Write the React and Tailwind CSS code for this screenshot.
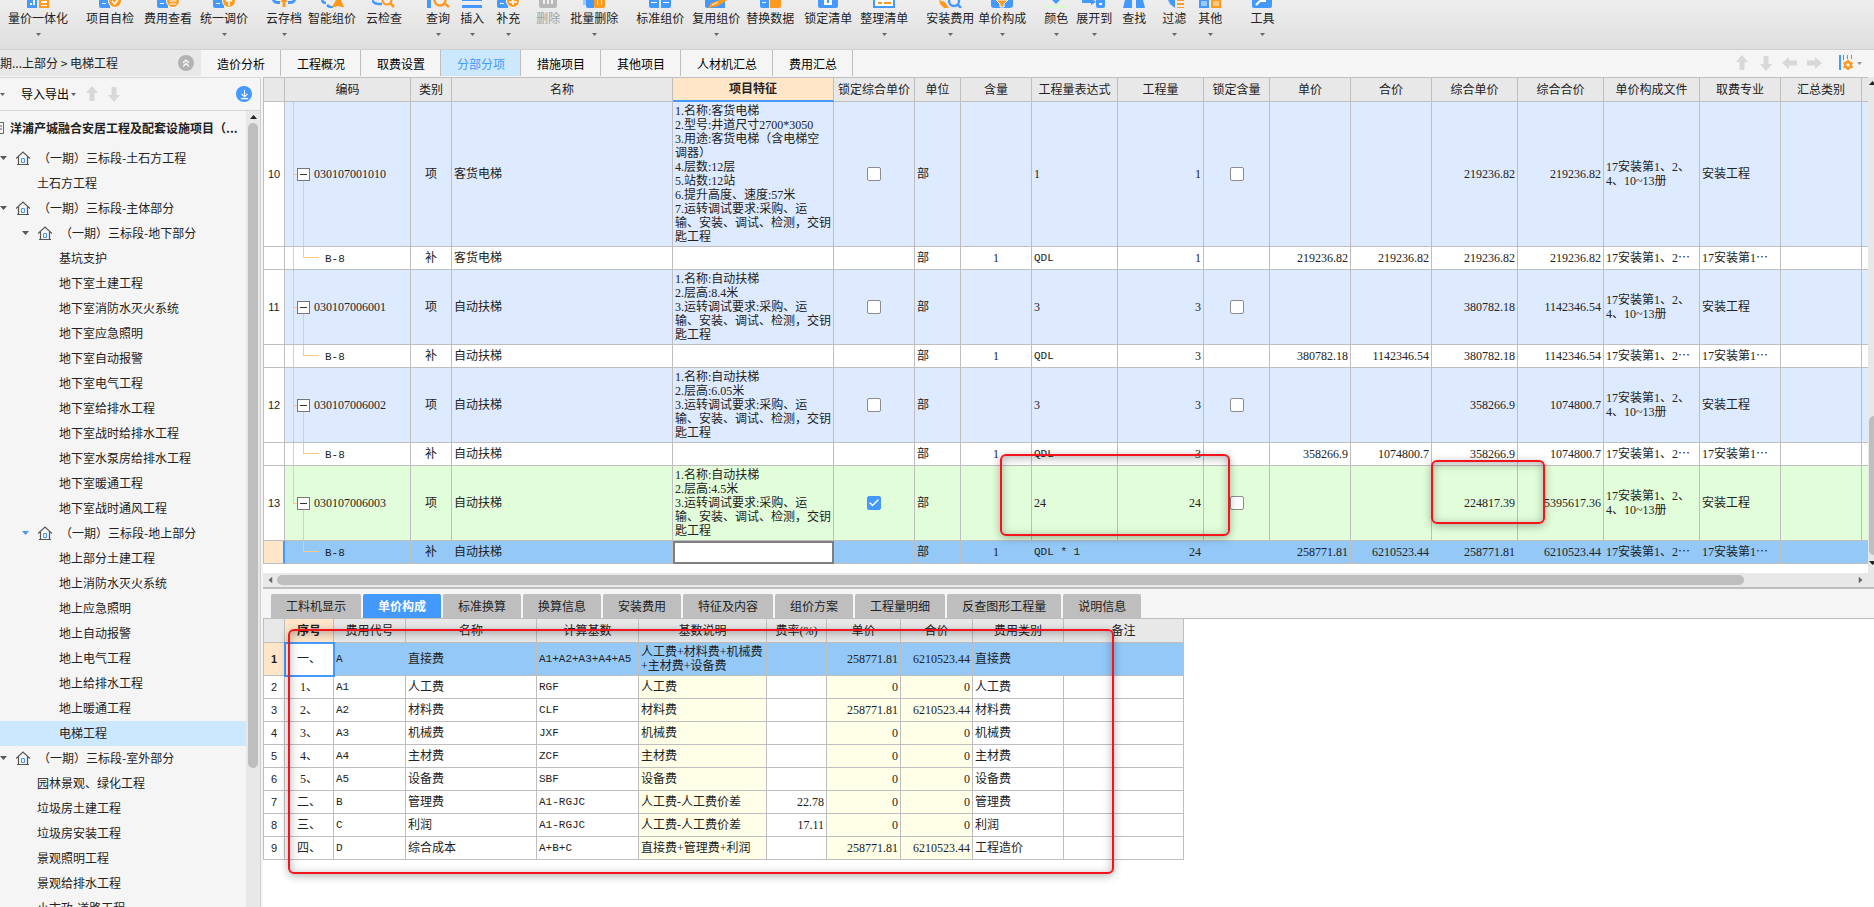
import React, { useState } from "react";
import { Check, ChevronsUp, ArrowDownToLine } from "lucide-react";

const BLUE = "#4499ff";
const ORANGE = "#ff9a1f";

const toolbar = [
  { label: "量价一体化", icon: "building", gap: "ml-2", menu: true },
  { label: "项目自检", icon: "docCheck", gap: "ml-4.5" },
  { label: "费用查看", icon: "docYen", gap: "ml-2.5" },
  { label: "统一调价", icon: "docUp", gap: "ml-2", menu: true },
  { label: "云存档", icon: "cloudUp", gap: "ml-4.5", menu: true },
  { label: "智能组价", icon: "smart", gap: "ml-1.5" },
  { label: "云检查", icon: "cloudSearch", gap: "ml-2.5" },
  { label: "查询", icon: "search", gap: "ml-6", menu: true },
  { label: "插入", icon: "lines", gap: "ml-2.5", menu: true },
  { label: "补充", icon: "docPlus", gap: "ml-3", menu: true },
  { label: "删除", icon: "trash", gap: "ml-4", disabled: true },
  { label: "批量删除", icon: "batchTrash", gap: "ml-2.5", menu: true },
  { label: "标准组价", icon: "blocks", gap: "ml-4.5" },
  { label: "复用组价", icon: "docPen", gap: "ml-2", menu: true },
  { label: "替换数据", icon: "swap", gap: "ml-1.5" },
  { label: "锁定清单", icon: "lock", gap: "ml-2.5" },
  { label: "整理清单", icon: "list", gap: "ml-2", menu: true },
  { label: "安装费用", icon: "wrench", gap: "ml-4.5", menu: true },
  { label: "单价构成", icon: "shield", gap: "ml-1", menu: true },
  { label: "颜色", icon: "color", gap: "ml-4.5", menu: true },
  { label: "展开到", icon: "expand", gap: "ml-2", menu: true },
  { label: "查找", icon: "binocular", gap: "ml-2.5" },
  { label: "过滤", icon: "filter", gap: "ml-4", menu: true },
  { label: "其他", icon: "squares", gap: "ml-3", menu: true },
  { label: "工具", icon: "tool", gap: "ml-7", menu: true },
];

const pageTabs = [
  "造价分析",
  "工程概况",
  "取费设置",
  "分部分项",
  "措施项目",
  "其他项目",
  "人材机汇总",
  "费用汇总",
];

const detailTabs = [
  "工料机显示",
  "单价构成",
  "标准换算",
  "换算信息",
  "安装费用",
  "特征及内容",
  "组价方案",
  "工程量明细",
  "反查图形工程量",
  "说明信息",
];

const tree = [
  { level: 1, group: true, label: "（一期）三标段-土石方工程" },
  { level: 1, label: "土石方工程" },
  { level: 1, group: true, label: "（一期）三标段-主体部分" },
  { level: 2, group: true, label: "（一期）三标段-地下部分" },
  { level: 2, label: "基坑支护" },
  { level: 2, label: "地下室土建工程" },
  { level: 2, label: "地下室消防水灭火系统" },
  { level: 2, label: "地下室应急照明" },
  { level: 2, label: "地下室自动报警" },
  { level: 2, label: "地下室电气工程" },
  { level: 2, label: "地下室给排水工程" },
  { level: 2, label: "地下室战时给排水工程" },
  { level: 2, label: "地下室水泵房给排水工程" },
  { level: 2, label: "地下室暖通工程" },
  { level: 2, label: "地下室战时通风工程" },
  { level: 2, group: true, active: true, label: "（一期）三标段-地上部分" },
  { level: 2, label: "地上部分土建工程" },
  { level: 2, label: "地上消防水灭火系统" },
  { level: 2, label: "地上应急照明" },
  { level: 2, label: "地上自动报警" },
  { level: 2, label: "地上电气工程" },
  { level: 2, label: "地上给排水工程" },
  { level: 2, label: "地上暖通工程" },
  { level: 2, label: "电梯工程" },
  { level: 1, group: true, label: "（一期）三标段-室外部分" },
  { level: 1, label: "园林景观、绿化工程" },
  { level: 1, label: "垃圾房土建工程" },
  { level: 1, label: "垃圾房安装工程" },
  { level: 1, label: "景观照明工程" },
  { level: 1, label: "景观给排水工程" },
  { level: 1, label: "小市政-道路工程" },
];

const columns = [
  { title: "", width: "w-[21px]" },
  { title: "编码", width: "w-[126px]" },
  { title: "类别", width: "w-[41px]" },
  { title: "名称", width: "w-[221px]" },
  { title: "项目特征", width: "w-[161px]" },
  { title: "锁定综合单价", width: "w-[81px]" },
  { title: "单位", width: "w-[46px]" },
  { title: "含量", width: "w-[71px]" },
  { title: "工程量表达式", width: "w-[86px]" },
  { title: "工程量", width: "w-[86px]" },
  { title: "锁定含量", width: "w-[66px]" },
  { title: "单价", width: "w-[81px]" },
  { title: "合价", width: "w-[81px]" },
  { title: "综合单价", width: "w-[86px]" },
  { title: "综合合价", width: "w-[86px]" },
  { title: "单价构成文件", width: "w-[96px]" },
  { title: "取费专业", width: "w-[81px]" },
  { title: "汇总类别", width: "w-[81px]" },
  { title: "", width: "" },
];

const escalator = (height) =>
  `1.名称:自动扶梯\n2.层高:${height}米\n3.运转调试要求:采购、运\n输、安装、调试、检测，交钥\n匙工程`;

const items = [
  {
    no: 10,
    code: "030107001010",
    name: "客货电梯",
    feature:
      "1.名称:客货电梯\n2.型号:井道尺寸2700*3050\n3.用途:客货电梯（含电梯空\n调器）\n4.层数:12层\n5.站数:12站\n6.提升高度、速度:57米\n7.运转调试要求:采购、运\n输、安装、调试、检测，交钥\n匙工程",
    qty: "1",
    price: "219236.82",
    total: "219236.82",
    child: { expr: "QDL", price: "219236.82", total: "219236.82" },
  },
  {
    no: 11,
    code: "030107006001",
    name: "自动扶梯",
    feature: escalator("8.4"),
    qty: "3",
    price: "380782.18",
    total: "1142346.54",
    child: { expr: "QDL", price: "380782.18", total: "1142346.54" },
  },
  {
    no: 12,
    code: "030107006002",
    name: "自动扶梯",
    feature: escalator("6.05"),
    qty: "3",
    price: "358266.9",
    total: "1074800.7",
    child: { expr: "QDL", price: "358266.9", total: "1074800.7" },
  },
  {
    no: 13,
    code: "030107006003",
    name: "自动扶梯",
    feature: escalator("4.5"),
    qty: "24",
    price: "224817.39",
    total: "5395617.36",
    locked: true,
    last: true,
    child: {
      expr: "QDL * 1",
      price: "258771.81",
      total: "6210523.44",
      selected: true,
    },
  },
];

const feeColumns = [
  { title: "", width: "w-[21px]" },
  { title: "序号", width: "w-[49px]" },
  { title: "费用代号", width: "w-[72px]" },
  { title: "名称", width: "w-[131px]" },
  { title: "计算基数", width: "w-[102px]" },
  { title: "基数说明", width: "w-[128px]" },
  { title: "费率(%)", width: "w-[60px]" },
  { title: "单价", width: "w-[74px]" },
  { title: "合价", width: "w-[72px]" },
  { title: "费用类别", width: "w-[91px]" },
  { title: "备注", width: "w-[120px]" },
];

const fees = [
  ["一、", "A", "直接费", "A1+A2+A3+A4+A5", "人工费+材料费+机械费\n+主材费+设备费", "", "258771.81", "6210523.44", "直接费"],
  ["1、", "A1", "人工费", "RGF", "人工费", "", "0", "0", "人工费"],
  ["2、", "A2", "材料费", "CLF", "材料费", "", "258771.81", "6210523.44", "材料费"],
  ["3、", "A3", "机械费", "JXF", "机械费", "", "0", "0", "机械费"],
  ["4、", "A4", "主材费", "ZCF", "主材费", "", "0", "0", "主材费"],
  ["5、", "A5", "设备费", "SBF", "设备费", "", "0", "0", "设备费"],
  ["二、", "B", "管理费", "A1-RGJC", "人工费-人工费价差", "22.78", "0", "0", "管理费"],
  ["三、", "C", "利润", "A1-RGJC", "人工费-人工费价差", "17.11", "0", "0", "利润"],
  ["四、", "D", "综合成本", "A+B+C", "直接费+管理费+利润", "", "258771.81", "6210523.44", "工程造价"],
];

// Lower part of each toolbar icon, the strip is scrolled under the window edge
const icons = {
  building: (
    <>
      <path d="M3 0h10v8H3z" fill={BLUE} />
      <path d="M6 3h2v2H6zM9 0h2v5H9z" fill="#fff" />
      <path d="M15 0h10v8H15z" fill={ORANGE} />
      <path d="M17 1h6v2h-6zM17 5h6v1h-6z" fill="#fff" />
    </>
  ),
  docCheck: (
    <>
      <path d="M3 0h11v8H5q-2 0-2-2z" fill={BLUE} />
      <path d="M6 3h4v1H6z" fill="#fff" />
      <circle cx="19" cy="1" r="6.5" fill={ORANGE} stroke="#fff" />
      <path d="M16 1l2.5 3 4-5" fill="none" stroke="#fff" strokeWidth="1.6" />
    </>
  ),
  docYen: (
    <>
      <path d="M3 0h11v8H5q-2 0-2-2z" fill={BLUE} />
      <path d="M6 3h4v1H6z" fill="#fff" />
      <circle cx="19" cy="1" r="6.5" fill={ORANGE} stroke="#fff" />
      <path d="M15.5 1h7M15.5 4h7" stroke="#fff" strokeWidth="1.2" />
    </>
  ),
  docUp: (
    <>
      <path d="M3 0h11v8H5q-2 0-2-2z" fill={BLUE} />
      <path d="M6 3h4v1H6z" fill="#fff" />
      <circle cx="19" cy="1" r="6.5" fill={ORANGE} stroke="#fff" />
      <path d="M19 6V0M16 1.5L19-1l3 2.5" fill="none" stroke="#fff" strokeWidth="1.6" />
    </>
  ),
  cloudUp: (
    <>
      <path d="M2 0q1 4 6 4h2V1H8Q6 1 5 0zM26 0q-1 4-6 4h-2V1h2q2 0 3-1z" fill={BLUE} />
      <path d="M12.5 0h3v7h-3z" fill={ORANGE} />
      <path d="M10 2l4-4 4 4z" fill={ORANGE} />
    </>
  ),
  smart: (
    <>
      <path d="M4 0q1 3 4 3M9 5q3 3 6 2" fill="none" stroke={BLUE} strokeWidth="2.5" />
      <path d="M18 0h5l3 7h-4l-1-1h-2l-1 1h-4z" fill={ORANGE} />
    </>
  ),
  cloudSearch: (
    <>
      <path d="M2 0q2 4 7 4h3" fill="none" stroke={BLUE} strokeWidth="2.5" />
      <circle cx="17" cy="0" r="4.5" fill="none" stroke={ORANGE} strokeWidth="2.2" />
      <path d="M20 3l4 4" stroke={ORANGE} strokeWidth="2.5" />
    </>
  ),
  search: (
    <>
      <path d="M3 0h4v8H3z" fill={BLUE} />
      <circle cx="16" cy="0" r="5.5" fill="none" stroke={ORANGE} strokeWidth="2.4" />
      <path d="M20 3l5 4" stroke={ORANGE} strokeWidth="2.5" />
    </>
  ),
  lines: <path d="M4 0h20v1H4zM4 5h20v3H4z" fill={BLUE} />,
  docPlus: (
    <>
      <path d="M3 0h11v8H5q-2 0-2-2z" fill={BLUE} />
      <path d="M6 3h4v1H6z" fill="#fff" />
      <circle cx="19" cy="1" r="6.5" fill={ORANGE} stroke="#fff" />
      <path d="M19-2v7M15 2h8" stroke="#fff" strokeWidth="1.6" />
    </>
  ),
  trash: (
    <>
      <path d="M5 0h18v6q0 2-2 2H7q-2 0-2-2z" fill="#b8b8b8" />
      <path d="M9 0h2v4H9zM13 0h2v4h-2zM17 0h2v4h-2z" fill="#f0f0f0" />
    </>
  ),
  batchTrash: (
    <>
      <path d="M3 0h3v5H3z" fill="#9ccaff" />
      <path d="M6 0h8v8H8q-2 0-2-2z" fill={BLUE} />
      <path d="M14 0h11v6q0 2-2 2h-7q-2 0-2-2z" fill={ORANGE} />
      <path d="M17 0h1v5h-1zM21 0h1v5h-1z" fill="#fff" />
    </>
  ),
  blocks: (
    <>
      <path d="M3 0h10v8H5q-2 0-2-2zM15 0h10v6q0 2-2 2h-8z" fill={BLUE} />
      <path d="M5 2h6v1H5zM17 2h6v1h-6z" fill="#fff" />
    </>
  ),
  docPen: (
    <>
      <path d="M3 0h20v8H5q-2 0-2-2z" fill={BLUE} />
      <path d="M6 8l3-5 9-3h7l-9 6z" fill={ORANGE} />
      <path d="M10 5l6-3" stroke="#fff" />
    </>
  ),
  swap: (
    <>
      <path d="M4 0h9v8H6q-2 0-2-2z" fill={BLUE} />
      <path d="M14 0h11v6q0 2-2 2h-9z" fill={ORANGE} />
      <path d="M6 2h4v1H6z" fill="#fff" />
    </>
  ),
  lock: (
    <>
      <path d="M4 0h20v6q0 2-2 2H6q-2 0-2-2z" fill={BLUE} />
      <path d="M10 0h8v5h-8z" fill="#fff" />
      <path d="M13 0h2v3h-2z" fill={BLUE} />
    </>
  ),
  list: (
    <>
      <path d="M4 0v7h20V0" fill="#fff" stroke={BLUE} strokeWidth="2" />
      <path d="M8 2h4v2H8z" fill={ORANGE} />
      <path d="M14 2h7v2h-7z" fill={ORANGE} />
    </>
  ),
  wrench: (
    <>
      <path d="M3 0l6 2 4 6H8L4 4z" fill={ORANGE} />
      <circle cx="18" cy="1" r="5" fill="none" stroke={BLUE} strokeWidth="2.4" />
      <path d="M21 4l4 4" stroke={BLUE} strokeWidth="2.5" />
    </>
  ),
  shield: (
    <>
      <path d="M3 0h22v5q0 3-3 3H6q-3 0-3-3z" fill={BLUE} />
      <path d="M8 0h12l-4 4v3h-4V4z" fill={ORANGE} stroke="#fff" />
    </>
  ),
  color: (
    <>
      <path d="M10 0h8l-4 4z" fill={BLUE} />
      <path d="M3 5h22v3H3z" fill="#dcf7d3" />
    </>
  ),
  expand: (
    <>
      <path d="M2 0h9v-2l5 4-5 3V3H2z" fill={BLUE} />
      <path d="M16 0h9v6q0 2-2 2h-5q-2 0-2-2z" fill={BLUE} />
      <path d="M19 3h3v2h-3z" fill="#fff" />
    </>
  ),
  binocular: <path d="M5 0h7v8H3zM16 0h7l2 8h-9z" fill={BLUE} />,
  filter: (
    <>
      <path d="M8 0h7v8l-5-4z" fill={BLUE} />
      <path d="M17 0h7v1h-7zM17 3h7v2h-7zM17 7h7v1h-7z" fill={ORANGE} />
    </>
  ),
  squares: (
    <>
      <path d="M4 0h8v7H4z" fill="#9ccaff" stroke={BLUE} strokeWidth="2" />
      <path d="M16 0h8v7h-8z" fill="#ffc87f" stroke={ORANGE} strokeWidth="2" />
    </>
  ),
  tool: (
    <>
      <path d="M4 0h20v6q0 2-2 2H6q-2 0-2-2z" fill={BLUE} />
      <path d="M8 5l4-4h6" fill="none" stroke="#fff" strokeWidth="2.2" />
    </>
  ),
};

const Caret = ({ className = "text-[#666]", size = 7 }) => (
  <svg width={size} height={size === 7 ? 4 : 3} viewBox="0 0 7 4" className={`shrink-0 ${className}`}>
    <path d="M0 0h7L3.5 4z" fill="currentColor" />
  </svg>
);

const BlockArrow = ({ rotate = "" }) => (
  <svg width="16" height="16" viewBox="0 0 16 16" className={`text-[#d8d8d8] ${rotate}`}>
    <path d="M8 0l6 7h-3.5v8h-5V7H2z" fill="currentColor" />
  </svg>
);

const House = () => (
  <svg width="14" height="14" viewBox="0 0 14 14" fill="none" className="shrink-0">
    <path d="M0 7.5L7 1l7 6.5M2.5 6v7.5M11.5 6v7.5M1 13.5h12" stroke="#555" strokeWidth="1.2" />
    <path d="M5.5 7.5h3v4h-3z" stroke={BLUE} />
  </svg>
);

const LockBox = ({ label, checked }) => {
  const [on, setOn] = useState(!!checked);

  return (
    <label className="relative mx-auto block size-3.5">
      <input
        type="checkbox"
        aria-label={label}
        checked={on}
        onChange={(e) => setOn(e.target.checked)}
        className="block size-3.5 appearance-none rounded-xs border border-[#8c8c8c] bg-white checked:border-[#4499ff] checked:bg-[#4499ff]"
      />
      {on && (
        <Check size={12} strokeWidth={3} className="pointer-events-none absolute top-px left-px text-white" />
      )}
    </label>
  );
};

// Red frame drawn over the tables
const Mark = ({ className }) => (
  <div
    className={`pointer-events-none absolute z-20 rounded-md border-2 border-[#f5141c] shadow-[0_2px_8px_rgba(0,0,0,0.3),inset_0_2px_10px_rgba(0,0,0,0.3)] ${className}`}
  />
);

const cell = "border-r border-b border-[#bebebe] px-0.5 py-0.5";
const single = `${cell} h-[23px] whitespace-nowrap overflow-hidden`;
const code = "font-['Liberation_Mono'] text-[11px]";

const ItemRows = ({ item }) => {
  const { child } = item;
  const bg = item.last ? "bg-[#e2fdd9]" : "bg-[#deeaff]";
  const childBg = child.selected ? "bg-[#93c8f7]" : "bg-white";

  return (
    <>
      <tr className={bg}>
        <td className={`${cell} bg-white text-center font-['Liberation_Sans'] text-[11px]`}>{item.no}</td>
        <td className={`${cell} relative`}>
          <span className={`absolute top-0 left-2 w-px bg-[#ffc87f] ${item.last ? "h-1/2" : "h-full"}`} />
          <span className="absolute top-1/2 left-2 h-px w-1 bg-[#ffc87f]" />
          <span className="absolute top-1/2 bottom-0 left-[18px] w-px bg-[#ffc87f]" />
          <div className="flex items-center gap-1 pl-2.5">
            <button
              type="button"
              aria-label="折叠"
              className="relative flex size-[13px] shrink-0 items-center justify-center border border-[#777] bg-white"
            >
              <span className="h-px w-[7px] bg-[#333]" />
            </button>
            {item.code}
          </div>
        </td>
        <td className={`${cell} text-center`}>项</td>
        <td className={cell}>{item.name}</td>
        <td className={`${cell} whitespace-pre`}>{item.feature}</td>
        <td className={cell}>
          <LockBox label="锁定综合单价" checked={item.locked} />
        </td>
        <td className={cell}>部</td>
        <td className={cell} />
        <td className={cell}>{item.qty}</td>
        <td className={`${cell} text-right`}>{item.qty}</td>
        <td className={cell}>
          <LockBox label="锁定含量" />
        </td>
        <td className={cell} />
        <td className={cell} />
        <td className={`${cell} text-right`}>{item.price}</td>
        <td className={`${cell} text-right`}>{item.total}</td>
        <td className={`${cell} whitespace-pre`}>{"17安装第1、2、\n4、10~13册"}</td>
        <td className={cell}>安装工程</td>
        <td className={cell} />
        <td className="border-b border-[#bebebe]" />
      </tr>

      <tr className={childBg}>
        <td
          className={
            child.selected
              ? "h-[23px] border-r-2 border-b border-r-[#4499ff] border-b-[#bebebe] bg-[#ffe6c8]"
              : `${single} bg-white`
          }
        />
        <td className={`${single} relative`}>
          {!item.last && <span className="absolute top-0 left-2 h-full w-px bg-[#ffc87f]" />}
          <span className="absolute top-0 left-[18px] h-1/2 w-4 border-b border-l border-[#ffc87f]" />
          <span className={`pl-9.5 ${code}`}>B-8</span>
        </td>
        <td className={`${single} text-center`}>补</td>
        <td className={single}>{item.name}</td>
        {child.selected ? (
          <td className="h-[23px] p-0">
            <input
              aria-label="项目特征"
              className="block h-[23px] w-full border-2 border-[#7f7f7f] bg-white px-0.5 outline-none"
            />
          </td>
        ) : (
          <td className={single} />
        )}
        <td className={single} />
        <td className={single}>部</td>
        <td className={`${single} text-center`}>1</td>
        <td className={`${single} ${code}`}>{child.expr}</td>
        <td className={`${single} text-right`}>{item.qty}</td>
        <td className={single} />
        <td className={`${single} text-right`}>{child.price}</td>
        <td className={`${single} text-right`}>{child.total}</td>
        <td className={`${single} text-right`}>{child.price}</td>
        <td className={`${single} text-right`}>{child.total}</td>
        <td className={single}>17安装第1、2⋯</td>
        <td className={single}>17安装第1⋯</td>
        <td className={single} />
        <td className="border-b border-[#bebebe]" />
      </tr>
    </>
  );
};

const App = () => {
  const [pageTab, setPageTab] = useState("分部分项");
  const [detailTab, setDetailTab] = useState("单价构成");
  const [node, setNode] = useState("电梯工程");

  return (
    <div
      lang="zh-CN"
      className="flex h-screen flex-col overflow-hidden bg-[#f5f5f5] font-['Noto_Sans_CJK_SC',sans-serif] text-xs text-[#222]"
    >
      {/* Toolbar */}
      <header className="flex h-[50px] shrink-0 items-start border-b border-[#cfcfcf] bg-linear-to-b from-[#eeeeee] to-[#dedede]">
        {toolbar.map((tool) => (
          <button
            key={tool.label}
            type="button"
            disabled={tool.disabled}
            className={`flex shrink-0 flex-col items-center whitespace-nowrap disabled:text-[#a0a0a0] ${tool.gap}`}
          >
            <svg width="24" height="8" viewBox="2 0 24 8">
              {icons[tool.icon]}
            </svg>
            <span className="h-[25px] leading-5">{tool.label}</span>
            {tool.menu && <Caret size={5} />}
          </button>
        ))}
      </header>

      {/* Breadcrumb and page tabs */}
      <div className="flex h-[27px] shrink-0 items-stretch pb-px">
        <div className="flex w-[201px] shrink-0 items-center bg-[#e8e8e8]">
          <div className="flex w-[118px] justify-end overflow-hidden whitespace-pre">
            期...上部分 &gt; 电梯工程
          </div>
          <button
            type="button"
            aria-label="收起"
            className="ml-15 flex size-4 items-center justify-center rounded-full bg-[#b3b3b3] text-white"
          >
            <ChevronsUp size={12} strokeWidth={2.5} />
          </button>
        </div>
        <nav className="flex flex-1">
          {pageTabs.map((tab) => (
            <button
              key={tab}
              type="button"
              onClick={() => setPageTab(tab)}
              className={`border-r border-[#bebebe] pt-0.5 pr-[15px] pl-4 ${
                pageTab === tab ? "bg-[#cce8ff] text-[#4499ff]" : "text-black"
              }`}
            >
              {tab}
            </button>
          ))}
        </nav>
        <div className="flex items-center gap-2 pr-3">
          <BlockArrow />
          <BlockArrow rotate="rotate-180" />
          <BlockArrow rotate="-rotate-90" />
          <BlockArrow rotate="rotate-90" />
          <button type="button" aria-label="列设置" className="ml-2 flex items-center gap-1">
            <svg width="15" height="16" viewBox="0 0 15 16">
              <path d="M1 0h2v15H1zM5 0h1v5H5zM9 0h1v4H9zM13 0h1v4h-1z" fill={BLUE} />
              <circle cx="10" cy="10" r="3" fill="none" stroke={ORANGE} strokeWidth="2.5" />
              <path d="M10 5v2M10 13v2M5.5 7.5l2 1M12.5 11.5l2 1M5.5 12.5l2-1M12.5 8.5l2-1" stroke={ORANGE} strokeWidth="2" />
            </svg>
            <Caret className="text-[#999]" size={5} />
          </button>
        </div>
      </div>

      <div className="flex min-h-0 flex-1">
        {/* Project tree */}
        <aside className="flex w-[261px] shrink-0 flex-col border-r border-[#cfcfcf]">
          <div className="flex h-[34px] shrink-0 items-center border-y border-[#d6d6d6]">
            <Caret size={5} />
            <button type="button" className="ml-4 flex items-center gap-0.5 text-black">
              导入导出
              <Caret size={5} />
            </button>
            <div className="ml-2 flex gap-1.5">
              <BlockArrow />
              <BlockArrow rotate="rotate-180" />
            </div>
            <button
              type="button"
              aria-label="下载"
              className="mr-2 ml-auto flex size-4 items-center justify-center rounded-full bg-[#4499ff] text-white"
            >
              <ArrowDownToLine size={11} strokeWidth={2.5} />
            </button>
          </div>

          <div className="flex min-h-0 flex-1">
            <div className="min-w-0 flex-1 overflow-hidden">
              <div className="flex h-[35px] items-center gap-1.5 pb-0.5 font-bold whitespace-nowrap">
                <svg width="4" height="12" viewBox="0 0 4 12">
                  <path d="M0 .5h3.5v11H0M0 4h2M0 7h2" fill="none" stroke="#666" />
                </svg>
                洋浦产城融合安居工程及配套设施项目（...
              </div>
              <ul>
                {tree.map((row) => (
                  <li key={row.label}>
                    <button
                      type="button"
                      onClick={() => setNode(row.label)}
                      className={`flex h-[25px] w-full items-center pb-0.5 whitespace-nowrap ${
                        node === row.label ? "bg-[#cce8ff]" : ""
                      } ${row.level === 2 ? "pl-[22px]" : ""}`}
                    >
                      {row.group ? (
                        <>
                          <Caret className={row.active ? "text-[#4499ff]" : "text-[#555]"} />
                          <span className="mr-2 ml-[9px]">
                            <House />
                          </span>
                        </>
                      ) : (
                        <span className="w-[37px]" />
                      )}
                      {row.label}
                    </button>
                  </li>
                ))}
              </ul>
            </div>
            <div className="flex w-3.5 flex-col items-center bg-[#e8e8e8]">
              <Caret className="my-1 rotate-180" />
              <div className="h-[81%] w-2.5 rounded-full bg-[#bebebe]" />
            </div>
          </div>
        </aside>

        <main className="ml-0.5 flex min-w-0 flex-1 flex-col">
          {/* Bill of quantities */}
          <section className="flex shrink-0 bg-white">
            <div className="relative min-w-0 flex-1 overflow-hidden pb-[9px]">
              <table className="w-full table-fixed border-separate border-spacing-0 border-t border-l border-[#bebebe] font-['Liberation_Serif','Noto_Sans_CJK_SC',serif] leading-[14px]">
                <colgroup>
                  {columns.map((col, i) => (
                    <col key={i} className={col.width} />
                  ))}
                </colgroup>
                <thead>
                  <tr>
                    {columns.map((col, i) => (
                      <th
                        key={i}
                        className={`h-6 overflow-hidden p-0 whitespace-nowrap ${
                          col.title === "项目特征"
                            ? "border-r border-b-2 border-r-[#bebebe] border-b-[#4499ff] bg-[#ffe6c8] font-bold"
                            : "border-b border-[#bebebe] bg-[#e8e8e8] font-normal not-last:border-r"
                        }`}
                      >
                        {col.title}
                      </th>
                    ))}
                  </tr>
                </thead>
                <tbody>
                  {items.map((item) => (
                    <ItemRows key={item.no} item={item} />
                  ))}
                </tbody>
              </table>
              <Mark className="top-[377px] left-[737px] h-[82px] w-[230px]" />
              <Mark className="top-[383px] left-[1168px] h-[64px] w-[114px]" />
            </div>
            <div className="flex w-1.5 flex-col items-start overflow-hidden bg-[#e8e8e8] pl-px">
              <Caret className="my-1 rotate-180" />
              <div className="mt-auto h-[28%] w-2.5 rounded-full bg-[#bebebe]" />
              <Caret className="mt-1.5 mb-2" />
            </div>
          </section>

          {/* Horizontal scrollbar */}
          <div className="flex h-4 shrink-0 items-center border-b-2 border-[#bebebe] bg-[#e8e8e8] px-1">
            <Caret className="rotate-90 text-[#666]" />
            <div className="mx-[3px] flex-1">
              <div className="h-2.5 w-[93%] rounded-full bg-[#bebebe]" />
            </div>
            <Caret className="mr-1.5 -rotate-90 text-[#666]" />
          </div>

          {/* Detail tabs */}
          <nav className="flex h-[30px] shrink-0 items-stretch gap-0.5 border-b border-[#bebebe] pt-[5px] pl-2">
            {detailTabs.map((tab) => (
              <button
                key={tab}
                type="button"
                onClick={() => setDetailTab(tab)}
                className={`rounded-t-xs px-[15px] whitespace-nowrap ${
                  detailTab === tab ? "bg-[#4499ff] font-bold text-white" : "bg-[#bebebe]"
                }`}
              >
                {tab}
              </button>
            ))}
          </nav>

          {/* Unit price breakdown */}
          <section className="relative flex-1 overflow-hidden bg-white">
            <table className="w-[921px] table-fixed border-separate border-spacing-0 border-l border-[#bebebe] font-['Liberation_Serif','Noto_Sans_CJK_SC',serif] leading-[14px]">
              <colgroup>
                {feeColumns.map((col, i) => (
                  <col key={i} className={col.width} />
                ))}
              </colgroup>
              <thead>
                <tr>
                  {feeColumns.map((col, i) => (
                    <th
                      key={i}
                      className={`h-6 border-r border-b border-[#bebebe] p-0 ${
                        col.title === "序号" ? "bg-[#ffe6c8] font-bold" : "bg-[#e8e8e8] font-normal"
                      }`}
                    >
                      {col.title}
                    </th>
                  ))}
                </tr>
              </thead>
              <tbody>
                {fees.map((fee, i) => {
                  const active = i === 0;
                  const derived = active ? "" : "bg-[#ffffe8]";

                  return (
                    <tr key={i} className={active ? "bg-[#93c8f7]" : "bg-white"}>
                      <td
                        className={`${cell} text-center font-['Liberation_Sans'] text-[11px] ${
                          active ? "h-[33px] bg-[#ffe6c8] font-bold" : "h-[23px] bg-white"
                        }`}
                      >
                        {i + 1}
                      </td>
                      <td
                        className={`${cell} text-center ${
                          active ? "relative bg-white outline-2 -outline-offset-1 outline-[#4499ff]" : ""
                        }`}
                      >
                        {fee[0]}
                      </td>
                      <td className={`${cell} ${code}`}>{fee[1]}</td>
                      <td className={cell}>{fee[2]}</td>
                      <td className={`${cell} ${code}`}>{fee[3]}</td>
                      <td className={`${cell} whitespace-pre ${derived}`}>{fee[4]}</td>
                      <td className={`${cell} text-right`}>{fee[5]}</td>
                      <td className={`${cell} text-right ${derived}`}>{fee[6]}</td>
                      <td className={`${cell} text-right ${derived}`}>{fee[7]}</td>
                      <td className={cell}>{fee[8]}</td>
                      <td className={cell} />
                    </tr>
                  );
                })}
              </tbody>
            </table>
            <Mark className="top-2.5 left-[25px] h-[245px] w-[826px]" />
          </section>
        </main>
      </div>
    </div>
  );
};

export default App;
